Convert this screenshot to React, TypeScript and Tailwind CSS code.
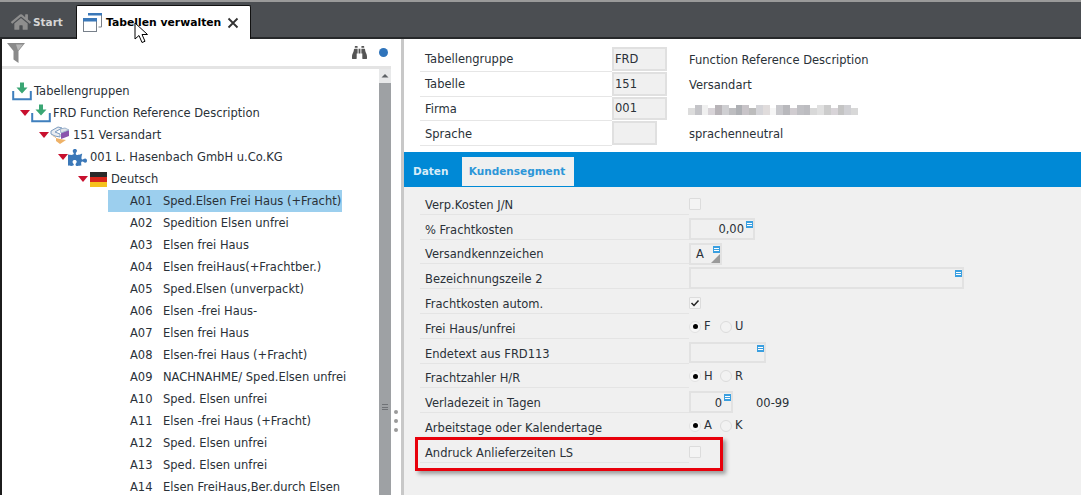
import React from "react";
import { FaBinoculars, FaPuzzlePiece, FaHome } from "react-icons/fa";

const treeItems = [
  ["A01", "Sped.Elsen Frei Haus (+Fracht)"],
  ["A02", "Spedition Elsen unfrei"],
  ["A03", "Elsen frei Haus"],
  ["A04", "Elsen freiHaus(+Frachtber.)"],
  ["A05", "Sped.Elsen (unverpackt)"],
  ["A06", "Elsen -frei Haus-"],
  ["A07", "Elsen frei Haus"],
  ["A08", "Elsen-frei Haus (+Fracht)"],
  ["A09", "NACHNAHME/ Sped.Elsen unfrei"],
  ["A10", "Sped. Elsen unfrei"],
  ["A11", "Elsen -frei Haus (+Fracht)"],
  ["A12", "Sped. Elsen unfrei"],
  ["A13", "Sped. Elsen unfrei"],
  ["A14", "Elsen FreiHaus,Ber.durch Elsen"],
];

const mosaic = [
  "#dcdcdc", "#c4c4c8", "#f0f0f0", "#d8d4d8", "#b8b4b8", "#cfcfd2", "#bdbdc0", "#aeb0b4", "#c8c4c8", "#bcbcbc", "#d4d4d8", "#e0dcdc",
  "#f6f6f6", "#c8c8cc", "#b8b8bc", "#d0ccd0", "#c0c0c4", "#bcbcc0", "#d8d8d8", "#e0e0e0", "#cccccc", "#d8d4d8", "#c4c4c4", "#d0d0d4", "#d8d8d8",
];

const Tray = () => (
  <svg width="20" height="19" viewBox="0 0 20 19" className="shrink-0">
    <path d="M8 0.500h4v5h3.500L10 11.500 4.500 5.500H8z" fill="#3aa674" />
    <path d="M1.200 9v8.300h17.600V9" fill="none" stroke="#3f7fbd" strokeWidth="2" />
  </svg>
);

const Caret = () => (
  <svg width="10" height="6" viewBox="0 0 10 6" className="shrink-0">
    <path d="M0 0h10L5 6z" fill="#c8102e" />
  </svg>
);

const LayersIcon = () => (
  <svg width="20" height="18" viewBox="0 0 20 18" className="shrink-0">
    <path d="M1 9l5 2 0 4 4 3 6-4-6-1-4-1z" fill="#eeb268" />
    <path d="M11 7l8-3v6l-8 3z" fill="#8a55ad" />
    <path d="M1 8V5l7-4 4 1-7 4 5 2 0 3-5-1z" fill="#e9ecf0" stroke="#7c9cc0" strokeWidth="1" />
    <path d="M10 3l5-1 4 2-8 3z" fill="#dfe3e8" stroke="#8aa4c4" strokeWidth="0.800" />
  </svg>
);

const Flag = () => (
  <svg width="17" height="15" viewBox="0 0 17 15" className="shrink-0">
    <rect width="17" height="5" fill="#2a2a2a" />
    <rect y="5" width="17" height="5" fill="#d8261c" />
    <rect y="10" width="17" height="5" fill="#f6c21c" />
  </svg>
);

const WindowsIcon = () => (
  <svg width="19" height="19" viewBox="0 0 19 19" className="shrink-0">
    <path d="M5.500 1h13v13h-3" fill="none" stroke="#7a8088" strokeWidth="1" />
    <rect x="5" y="0" width="14" height="2.500" fill="#3b78b8" />
    <rect x="0.500" y="5.500" width="13" height="13" fill="#fff" stroke="#77808a" strokeWidth="1" />
    <rect x="0" y="5" width="14" height="3.500" fill="#3b78b8" />
  </svg>
);

const Burger = () => (
  <div className="absolute top-[1px] right-0 flex h-[7px] w-[7px] flex-col justify-center gap-px bg-[#3a9fe0] px-px">
    <span className="h-px bg-white" />
    <span className="h-px bg-white" />
  </div>
);

const HeadRow = ({ label, value, desc, short }: { label: string; value: string; desc?: string; short?: boolean }) => (
  <div className="flex h-[24.8px]">
    <div className="flex w-[192px] items-center border-b border-[#e6e6e6] pt-[2px] pl-[5px]">{label}</div>
    <div className={`mb-[1px] flex items-center border-2 border-[#e0e0e0] bg-[#f0f0f0] pt-[1px] pl-[1px] ${short ? "w-[45px]" : "w-[55px]"}`}>
      {value}
    </div>
    <div className={`flex items-center pt-[2px] ${short ? "ml-[32px]" : "ml-[22px]"}`}>
      {desc ?? (
        <svg width="170" height="15" viewBox="0 0 170 15" shapeRendering="crispEdges" className="-ml-px">
          {mosaic.map((c, i) => (
            <rect key={i} x={i * 6.800} y={3 + (i % 3 === 0 ? 3 : 0)} width="6.800" height={i % 3 === 0 ? 7 : 10} fill={c} />
          ))}
        </svg>
      )}
    </div>
  </div>
);

const FormRow = ({ label, children }: { label: string; children?: React.ReactNode }) => (
  <div className="flex h-[24.8px]">
    <div className="flex w-[269px] items-center border-b border-[#e4e4e4] pt-[7px] pl-[5px]">{label}</div>
    <div className="flex items-start">{children}</div>
  </div>
);

const Check = ({ checked }: { checked?: boolean }) => (
  <div className="mt-[8px] flex h-[12px] w-[12px] items-center justify-center rounded-[1px] border border-[#dcdcdc] bg-[#f4f4f4]">
    {checked && (
      <svg width="10" height="10" viewBox="0 0 10 10">
        <path d="M1.500 5l2.500 2.500 4.500-5" fill="none" stroke="#222" strokeWidth="1.500" />
      </svg>
    )}
  </div>
);

const Radio = ({ left, right }: { left: string; right: string }) => (
  <div className="mt-[4px] flex items-center">
    <span className="flex h-[12px] w-[12px] items-center justify-center rounded-full border border-[#e2e2e2] bg-[#f6f6f6]">
      <span className="h-[5px] w-[5px] rounded-full bg-black" />
    </span>
    <span className="ml-[3px] w-[16px]">{left}</span>
    <span className="h-[12px] w-[12px] rounded-full border border-[#dcdcdc] bg-[#f2f2f2]" />
    <span className="ml-[3px]">{right}</span>
  </div>
);

export default function App() {
  return (
    <div className="relative h-[495px] w-[1081px] overflow-hidden bg-white font-['DejaVu_Sans',sans-serif] text-[11.5px] text-[#2a3138]">
      {/* Tab bar */}
      <div className="flex h-[39px] items-end border-t-2 border-b-2 border-t-[#9a9a9a] border-b-[#26282a] bg-[#4b4e52] pl-[11px]">
        <div className="flex h-[33px] w-[65px] items-center gap-[2px] pt-[2px] text-[10.5px] font-bold text-[#d6d6d6]">
          <FaHome size={20} color="#8e8e8e" />
          <span className="pt-[2px]">Start</span>
        </div>
        <div className="-mb-[2px] flex h-[34px] w-[175px] items-center gap-[4px] rounded-t-[2px] border-x border-t border-[#111] bg-white pl-[6px] text-[10.8px] font-bold text-black">
          <WindowsIcon />
          <span className="pt-[2px]">Tabellen verwalten</span>
          <svg width="14" height="14" viewBox="0 0 14 14" className="ml-[1px]">
            <path d="M2.500 2.500l9 9M11.500 2.500l-9 9" stroke="#333" strokeWidth="1.800" />
          </svg>
        </div>
      </div>

      <div className="flex h-[456px] border-l-2 border-l-[#1c1c1c]">
        {/* Left panel */}
        <div className="flex w-[389px] flex-col">
          <div className="flex h-[30px] items-center justify-between border-b-[3px] border-[#e4e4e4] pr-[3px] pl-[5px]">
            <svg width="18" height="20" viewBox="0 0 18 20">
              <path d="M0 0h18l-6.500 8v12l-5-3.500V8z" fill="#8a8a8a" />
              <path d="M9 1.500h7l-5 6z" fill="#b8b8b8" />
            </svg>
            <div className="flex items-center gap-[12px]">
              <FaBinoculars size={15} color="#555" />
              <span className="h-[9px] w-[9px] rounded-full bg-[#2f74bb]" />
            </div>
          </div>
          <div className="flex min-h-0 flex-1">
            <div className="min-w-0 flex-1 pt-[11px]">
              <div className="flex h-[22px] items-center pl-[10px]">
                <Tray />
                <span className="ml-[2px] pt-[2px]">Tabellengruppen</span>
              </div>
              <div className="flex h-[22px] items-center pl-[18px]">
                <Caret />
                <span className="ml-[1px] flex"><Tray /></span>
                <span className="ml-[2px] pt-[2px]">FRD Function Reference Description</span>
              </div>
              <div className="flex h-[22px] items-center gap-[1px] pl-[37px]">
                <Caret />
                <LayersIcon />
                <span className="ml-[2px] pt-[2px]">151 Versandart</span>
              </div>
              <div className="flex h-[22px] items-center pl-[56px]">
                <Caret />
                <FaPuzzlePiece size={19} color="#3b78b8" />
                <span className="ml-[3px] pt-[2px]">001 L. Hasenbach GmbH u.Co.KG</span>
              </div>
              <div className="flex h-[22px] items-center gap-[2px] pl-[76px]">
                <Caret />
                <Flag />
                <span className="ml-[2px] pt-[2px]">Deutsch</span>
              </div>
              {treeItems.map(([code, name], i) => (
                <div
                  key={code}
                  className={`ml-[106px] flex h-[22px] w-[234px] items-center pt-[2px] pl-[22px] whitespace-nowrap ${i === 0 ? "bg-[#9ccfee]" : ""}`}
                >
                  <span className="w-[33px] shrink-0">{code}</span>
                  <span className="shrink-0">{name}</span>
                </div>
              ))}
            </div>
            {/* Scrollbar */}
            <div className="relative w-[12px] bg-[#e8e9ea]">
              <svg width="12" height="14" viewBox="0 0 12 14" className="block">
                <path d="M2.500 8.500L6 5l3.500 3.500z" fill="#5e6266" />
              </svg>
              <div className="absolute inset-x-0 top-[14px] bottom-0 bg-[#9ea1a4]" />
              <div className="absolute top-[335px] left-[3px] flex h-[6px] w-[6px] flex-col justify-between">
                <span className="h-px bg-[#6f7276]" />
                <span className="h-px bg-[#6f7276]" />
                <span className="h-px bg-[#6f7276]" />
              </div>
            </div>
          </div>
        </div>

        {/* Splitter */}
        <div className="flex w-[10px] flex-col items-center gap-[5px] pt-[371px]">
          <span className="h-[4px] w-[4px] rounded-full bg-[#9a9a9a]" />
          <span className="h-[4px] w-[4px] rounded-full bg-[#9a9a9a]" />
          <span className="h-[4px] w-[4px] rounded-full bg-[#9a9a9a]" />
        </div>

        {/* Right panel */}
        <div className="flex flex-1 flex-col border-l-[3px] border-l-[#c8c8c8]">
          <div className="h-[113px] pt-[8px] pl-[16px]">
            <HeadRow label="Tabellengruppe" value="FRD" desc="Function Reference Description" />
            <HeadRow label="Tabelle" value="151" desc="Versandart" />
            <HeadRow label="Firma" value="001" />
            <HeadRow label="Sprache" value="" desc="sprachenneutral" short />
          </div>
          <div className="flex h-[35px] items-end border-b border-[#0089d6] bg-[#0089d6] pl-px text-[10.5px] font-bold">
            <div className="flex h-[28px] w-[57px] items-center pl-[8px] text-[#d8ecf8]">Daten</div>
            <div className="flex h-[29px] w-[112px] items-center justify-center bg-[#f0f0f0] pr-[2px] text-[#2d96d8]">Kundensegment</div>
          </div>
          <div className="flex-1 bg-[#f0f0f0] pt-[3px] pl-[16px]">
            <FormRow label="Verp.Kosten J/N">
              <Check />
            </FormRow>
            <FormRow label="% Frachtkosten">
              <div className="relative mt-[3px] flex h-[22px] w-[66px] items-center justify-end border-2 border-[#e2e2e2] pt-[2px] pr-[9px]">
                0,00
                <Burger />
              </div>
            </FormRow>
            <FormRow label="Versandkennzeichen">
              <div className="relative mt-[3px] flex h-[22px] w-[33px] items-center border-2 border-[#e2e2e2] pt-[2px] pl-[5px]">
                A
                <Burger />
                <svg width="9" height="9" viewBox="0 0 9 9" className="absolute right-0 bottom-0">
                  <path d="M0 9l9-9v9z" fill="#9a9a9a" />
                </svg>
              </div>
            </FormRow>
            <FormRow label="Bezeichnungszeile 2">
              <div className="relative mt-[3px] h-[22px] w-[275px] border-2 border-[#e2e2e2]">
                <Burger />
              </div>
            </FormRow>
            <FormRow label="Frachtkosten autom.">
              <Check checked />
            </FormRow>
            <FormRow label="Frei Haus/unfrei">
              <Radio left="F" right="U" />
            </FormRow>
            <FormRow label="Endetext aus FRD113">
              <div className="relative mt-[3px] h-[21px] w-[77px] border-2 border-[#e2e2e2]">
                <Burger />
              </div>
            </FormRow>
            <FormRow label="Frachtzahler H/R">
              <Radio left="H" right="R" />
            </FormRow>
            <FormRow label="Verladezeit in Tagen">
              <div className="relative mt-[3px] flex h-[22px] w-[44px] items-center justify-end border-2 border-[#e2e2e2] pt-[2px] pr-[9px]">
                0
                <Burger />
              </div>
              <span className="mt-[7px] ml-[23px]">00-99</span>
            </FormRow>
            <FormRow label="Arbeitstage oder Kalendertage">
              <Radio left="A" right="K" />
            </FormRow>
            <FormRow label="Andruck Anlieferzeiten LS">
              <Check />
            </FormRow>
          </div>
        </div>
      </div>

      {/* Red annotation */}
      <div className="absolute top-[437px] left-[415px] h-[34px] w-[308px] border-[3px] border-[#e8000b] shadow-[3px_3px_4px_rgba(0,0,0,0.35)]" />

      {/* Mouse pointer */}
      <svg width="16" height="24" viewBox="0 0 16 24" className="absolute top-[22px] left-[134px]">
        <path d="M1 1v16l4-3.500 3 7 3-1.200-3-6.800h5.500z" fill="#fff" stroke="#000" strokeWidth="1" />
      </svg>
    </div>
  );
}
